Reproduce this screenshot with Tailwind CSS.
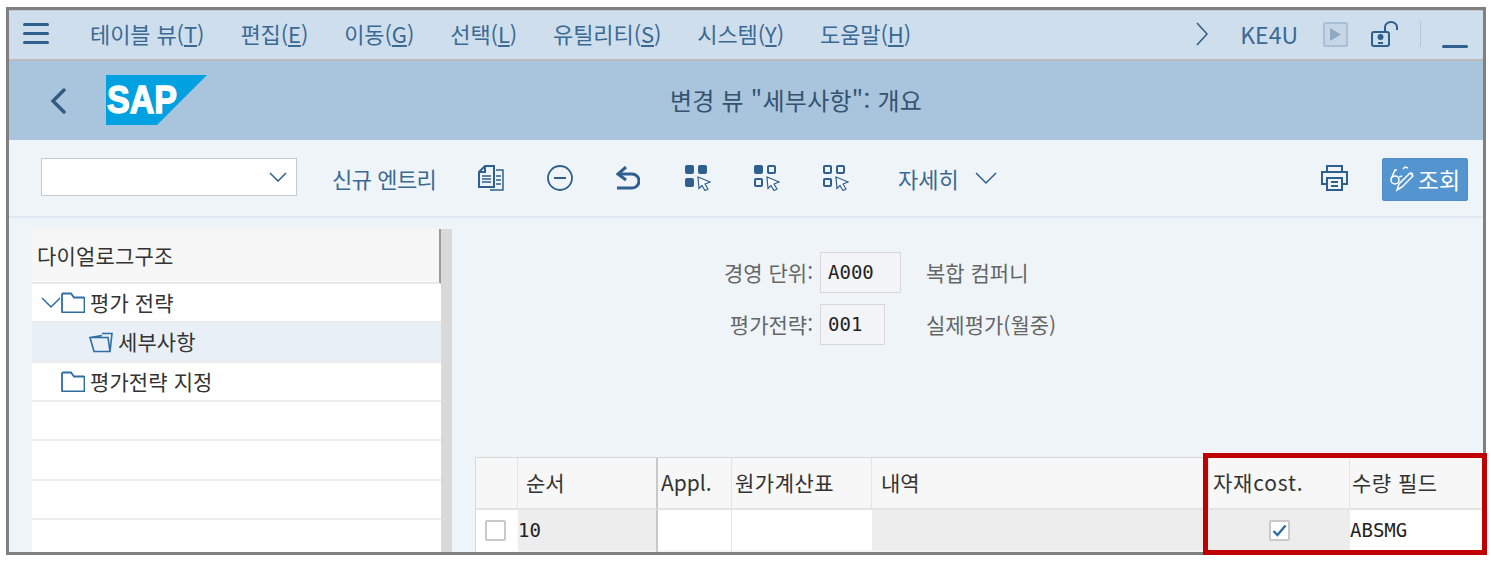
<!DOCTYPE html>
<html lang="ko">
<head>
<meta charset="UTF-8">
<title>변경 뷰 "세부사항": 개요</title>
<script src="https://cdn.jsdelivr.net/npm/@tailwindcss/browser@4"></script>
</head>
<body class="bg-white w-[1491px] h-[562px] overflow-hidden relative font-['Noto_Sans_CJK_KR','Noto_Sans',sans-serif]">

<div class="ml-[6px] mt-[7px] w-[1480px] h-[548px] border-[3px] border-[#808080] overflow-hidden flex flex-col bg-[#eff4f9]">

  <!-- menu bar -->
  <div class="h-[51px] shrink-0 pb-[4px] bg-[#cfdeed] border-b-2 border-[#bcbcbc] border-t-[1px] border-t-[#c4c8cc] flex items-center text-[#3a6a94] text-[22px] tracking-[-0.1px]">
    <div class="ml-[14px] w-[26px] flex flex-col gap-[6px]">
      <div class="h-[3px] rounded bg-[#2f5f8c]"></div>
      <div class="h-[3px] rounded bg-[#2f5f8c]"></div>
      <div class="h-[3px] rounded bg-[#2f5f8c]"></div>
    </div>
    <div class="ml-[41px] flex gap-[36px] whitespace-nowrap">
      <span>테이블 뷰(<u>T</u>)</span>
      <span>편집(<u>E</u>)</span>
      <span>이동(<u>G</u>)</span>
      <span>선택(<u>L</u>)</span>
      <span>유틸리티(<u>S</u>)</span>
      <span>시스템(<u>Y</u>)</span>
      <span>도움말(<u>H</u>)</span>
    </div>
    <div class="ml-auto mt-[2px] flex items-center">
      <svg width="12" height="24" viewBox="0 0 12 24" fill="none" stroke="#2f5f8c" stroke-width="1.6"><path d="M1 1l10 11L1 23"/></svg>
      <span class="ml-[32px] text-[23px] tracking-normal">KE4U</span>
      <div class="ml-[25px] w-[25px] h-[25px] border-2 border-[#a9c0d6] bg-[#c6d6e6] rounded-[2px] flex items-center justify-center">
        <svg width="11" height="13" viewBox="0 0 11 13"><path d="M0 0l11 6.500L0 13z" fill="#8fa9c2"/></svg>
      </div>
      <svg class="ml-[23px]" width="28" height="27" viewBox="0 0 28 27" fill="none" stroke="#2f5f8c" stroke-width="2"><rect x="1" y="11" width="17" height="14" rx="2"/><path d="M14 11V6a6 5 0 0 1 12 0v3"/><circle cx="9.500" cy="16" r="2" fill="#2f5f8c"/><path d="M7 22h5" /></svg>
      <div class="ml-[21px] w-px h-[26px] bg-[#b8c6d2]"></div>
      <div class="ml-[21px] mr-[15px] w-[26px] h-[3px] mt-[24px] rounded bg-[#2f5f8c]"></div>
    </div>
  </div>

  <!-- title bar -->
  <div class="h-[79px] shrink-0 bg-[#a9c4dd] relative flex items-center">
    <svg class="ml-[41px]" width="16" height="26" viewBox="0 0 16 26" fill="none" stroke="#2f5a82" stroke-width="3.400" stroke-linecap="round"><path d="M14 2L3 13l11 11"/></svg>
    <svg class="ml-[40px] -mt-[2px]" width="101" height="50" viewBox="0 0 101 50">
      <path d="M0 0h101L51 50H0z" fill="#00a1e0"/>
      <text x="1" y="38" font-family="Liberation Sans" font-weight="700" font-size="38" fill="#fff" stroke="#fff" stroke-width="1.400" textLength="70" lengthAdjust="spacingAndGlyphs">SAP</text>
    </svg>
    <div class="absolute left-0 right-0 -mt-[2px] pl-[100px] text-center text-[24px] text-[#33536f] tracking-[0.25px]">변경 뷰 "세부사항": 개요</div>
  </div>

  <!-- toolbar -->
  <div class="h-[78px] shrink-0 border-b-2 border-[#e0e9f2] flex items-center text-[#3a6a94] text-[22px] whitespace-nowrap">
    <div class="ml-[32px] -mt-[2px] w-[256px] h-[38px] bg-white border border-[#c6c9cc] flex items-center justify-end pr-[9px]">
      <svg width="18" height="10" viewBox="0 0 18 10" fill="none" stroke="#2f5f8c" stroke-width="1.500"><path d="M1 1l8 8 8-8"/></svg>
    </div>
    <span class="ml-[35px] w-[104px] tracking-[-0.5px]">신규 엔트리</span>
    <svg class="ml-[42px]" width="26" height="27" viewBox="0 0 26 27" fill="none" stroke="#2f5f8c" stroke-width="2"><path d="M7 1h9v21H1V7z"/><path d="M7 1v6H1" /><path d="M4 11h9M4 14h9M4 17h9" stroke-width="1.500"/><path d="M18 5h7v20h-13" stroke-width="1.500"/><path d="M18 11h5M18 15h5M18 19h5" stroke-width="1.500"/></svg>
    <svg class="ml-[43px]" width="26" height="26" viewBox="0 0 26 26" fill="none" stroke="#2f5f8c" stroke-width="1.800"><circle cx="13" cy="13" r="12"/><path d="M7 13h12" stroke-width="2"/></svg>
    <svg class="ml-[43px]" width="24" height="24" viewBox="0 0 24 24" fill="none" stroke="#2f5f8c" stroke-width="3"><path d="M10 1L2 8l8 6"/><path d="M2 8h14a6.500 6.500 0 0 1 0 14H1"/></svg>
    <svg class="ml-[45px]" width="26" height="26" viewBox="0 0 26 26">
      <rect x="0" y="0" width="9" height="9" rx="2" fill="#2f5f8c"/><rect x="13" y="0" width="9" height="9" rx="2" fill="#2f5f8c"/><rect x="0" y="13" width="9" height="9" rx="2" fill="#2f5f8c"/>
      <path d="M13 12l12 5-5 2 3 5-3 1.500-3-5-3 3z" fill="#fff" stroke="#2f5f8c" stroke-width="1.200"/>
    </svg>
    <svg class="ml-[43px]" width="26" height="26" viewBox="0 0 26 26">
      <rect x="0" y="0" width="9" height="9" rx="2" fill="#2f5f8c"/><rect x="14" y="1" width="7" height="7" rx="1" fill="none" stroke="#2f5f8c" stroke-width="2"/><rect x="1" y="14" width="7" height="7" rx="1" fill="none" stroke="#2f5f8c" stroke-width="2"/>
      <path d="M13 12l12 5-5 2 3 5-3 1.500-3-5-3 3z" fill="#fff" stroke="#2f5f8c" stroke-width="1.200"/>
    </svg>
    <svg class="ml-[43px]" width="26" height="26" viewBox="0 0 26 26">
      <rect x="1" y="1" width="7" height="7" rx="1" fill="none" stroke="#2f5f8c" stroke-width="2"/><rect x="14" y="1" width="7" height="7" rx="1" fill="none" stroke="#2f5f8c" stroke-width="2"/><rect x="1" y="14" width="7" height="7" rx="1" fill="none" stroke="#2f5f8c" stroke-width="2"/>
      <path d="M13 12l12 5-5 2 3 5-3 1.500-3-5-3 3z" fill="#fff" stroke="#2f5f8c" stroke-width="1.200"/>
    </svg>
    <span class="ml-[49px] w-[60px]">자세히</span>
    <svg class="ml-[17px]" width="22" height="13" viewBox="0 0 22 13" fill="none" stroke="#2f5f8c" stroke-width="1.500"><path d="M1 1l10 10L21 1"/></svg>
    <svg class="ml-auto" width="27" height="26" viewBox="0 0 27 26" fill="none" stroke="#2f5f8c" stroke-width="2"><path d="M6 7V1h15v6"/><path d="M6 19H1V7h25v12h-5"/><rect x="6" y="13" width="15" height="12"/><path d="M10 17h7M10 21h7" /></svg>
    <div class="ml-[34px] mr-[15px] mt-[2px] w-[86px] h-[43px] bg-[#5495cf] rounded-[2px] border border-[#4f8ec6] flex items-center justify-center text-white text-[23px] gap-[4px]">
      <svg width="24" height="26" viewBox="0 0 24 26" fill="none" stroke="#fff" stroke-width="1.500"><circle cx="5" cy="14" r="4"/><path d="M1 13L5 4h2M9 11l3-1"/><path d="M13 3l2-2 3 1M21 7l2 1"/><path d="M7 24l2-6L20 7l3 3-11 11z"/></svg>
      <span>조회</span>
    </div>
  </div>

  <!-- content -->
  <div class="flex-1 flex min-h-0">
    <!-- tree -->
    <div class="ml-[23px] mt-[11px] w-[420px] flex shrink-0 h-[400px]">
      <div class="w-[409px] text-[21px] text-[#333] tracking-[0.1px]">
        <div class="h-[55px] bg-[#f7f7f7] border-b-2 border-[#e8e8e8] border-r-2 border-r-[#9a9a9a] flex items-center pl-[5px] tracking-[0.2px]">다이얼로그구조</div>
        <div class="h-[39px] bg-white border-b-2 border-[#ededed] flex items-center pl-[9px]">
          <svg width="20" height="12" viewBox="0 0 20 12" fill="none" stroke="#2f6da3" stroke-width="1.500"><path d="M1 1l9 9 9-9"/></svg>
          <svg width="24" height="21" viewBox="0 0 24 21" fill="none" stroke="#2f6da3" stroke-width="1.800"><path d="M1 19.500V2.500a1 1 0 0 1 1-1h8l3 4h9.500a1 1 0 0 1 1 1v13a1 1 0 0 1-1 1H2a1 1 0 0 1-1-1z"/></svg>
          <span class="ml-[5px]">평가 전략</span>
        </div>
        <div class="h-[40px] bg-[#e8eff7] border-b-2 border-[#ededed] flex items-center pl-[57px]">
          <svg width="24" height="21" viewBox="0 0 24 21" fill="none" stroke="#2f6da3" stroke-width="1.600"><path d="M1 5.500l12-2M13 1.500h10l-2 18H5L1 5.500h18l2 14"/></svg>
          <span class="ml-[5px]">세부사항</span>
        </div>
        <div class="h-[39px] bg-white border-b-2 border-[#ededed] flex items-center pl-[29px]">
          <svg width="24" height="21" viewBox="0 0 24 21" fill="none" stroke="#2f6da3" stroke-width="1.800"><path d="M1 19.500V2.500a1 1 0 0 1 1-1h8l3 4h9.500a1 1 0 0 1 1 1v13a1 1 0 0 1-1 1H2a1 1 0 0 1-1-1z"/></svg>
          <span class="ml-[5px]">평가전략 지정</span>
        </div>
        <div class="h-[39px] bg-white border-b-2 border-[#ededed]"></div>
        <div class="h-[40px] bg-white border-b-2 border-[#ededed]"></div>
        <div class="h-[39px] bg-white border-b-2 border-[#ededed]"></div>
        <div class="h-[40px] bg-white"></div>
      </div>
      <div class="w-[11px] bg-[#d9d9d9]"></div>
    </div>

    <!-- right side -->
    <div class="flex-1 min-w-0 flex flex-col">
      <div class="h-[239px] shrink-0 pt-[34px] text-[21px] text-[#666]">
        <div class="flex items-center h-[41px]">
          <span class="w-[361px] text-right">경영 단위:</span>
          <div class="ml-[7px] w-[81px] h-[41px] bg-[#f2f4f7] border border-[#d9d9d9] flex items-center pl-[7px] font-['DejaVu_Sans_Mono',monospace] text-[#222] text-[19px]">A000</div>
          <span class="ml-[25px]">복합 컴퍼니</span>
        </div>
        <div class="flex items-center h-[41px] mt-[11px]">
          <span class="w-[361px] text-right">평가전략:</span>
          <div class="ml-[7px] w-[65px] h-[41px] bg-[#f2f4f7] border border-[#d9d9d9] flex items-center pl-[7px] font-['DejaVu_Sans_Mono',monospace] text-[#222] text-[19px]">001</div>
          <span class="ml-[41px]">실제평가(월중)</span>
        </div>
      </div>

      <!-- table -->
      <div class="ml-[23px] grid grid-cols-[42px_140px_74px_140px_337px_141px_134px] grid-rows-[52px_40px_8px] text-[21px] text-[#333] border-l border-[#d8d8d8] border-t whitespace-nowrap">
        <div class="bg-[#f7f7f7] border-r border-b-2 border-[#e4e4e4]"></div>
        <div class="bg-[#f7f7f7] border-r-2 border-r-[#c8c8c8] border-b-2 border-[#e4e4e4] flex items-center pl-[8px]">순서</div>
        <div class="bg-[#f7f7f7] border-r border-b-2 border-[#e4e4e4] flex items-center pl-[3px]">Appl.</div>
        <div class="bg-[#f7f7f7] border-r border-b-2 border-[#e4e4e4] flex items-center pl-[3px] tracking-[0.5px]">원가계산표</div>
        <div class="bg-[#f7f7f7] border-r border-b-2 border-[#e4e4e4] flex items-center pl-[9px]">내역</div>
        <div class="bg-[#f7f7f7] border-r border-b-2 border-[#e4e4e4] flex items-center pl-[4px] tracking-[0.8px]">자재cost.</div>
        <div class="bg-[#f7f7f7] border-b-2 border-[#e4e4e4] flex items-center pl-[2px] tracking-[0.5px]">수량 필드</div>

        <div class="bg-white flex items-center pl-[9px]"><div class="w-[21px] h-[21px] bg-white border-2 border-[#c9c9c9] rounded-[2px]"></div></div>
        <div class="bg-[#ededed] border-r-2 border-r-[#c8c8c8] flex items-center font-['DejaVu_Sans_Mono',monospace] text-[19px] text-[#222]">10</div>
        <div class="bg-white border-r border-[#e4e4e4]"></div>
        <div class="bg-white"></div>
        <div class="bg-[#ededed]"></div>
        <div class="bg-[#ededed] flex items-center justify-center">
          <div class="w-[21px] h-[21px] bg-white border-2 border-[#c9c9c9] rounded-[2px] flex items-center justify-center">
            <svg width="15" height="13" viewBox="0 0 15 13" fill="none" stroke="#2f6da3" stroke-width="2.400"><path d="M1.500 7l4 4 8-9.500"/></svg>
          </div>
        </div>
        <div class="bg-white flex items-center font-['DejaVu_Sans_Mono',monospace] text-[19px] text-[#222]">ABSMG</div>

        <div class="bg-white"></div>
        <div class="bg-[#f4f4f4] border-r-2 border-r-[#c8c8c8]"></div>
        <div class="bg-[#f4f4f4] border-r border-[#e4e4e4]"></div>
        <div class="bg-[#f4f4f4]"></div>
        <div class="bg-[#f4f4f4]"></div>
        <div class="bg-[#f4f4f4]"></div>
        <div class="bg-[#f4f4f4]"></div>
      </div>
    </div>
  </div>
</div>

<!-- red highlight box over the last two columns -->
<div class="absolute left-[1203px] top-[453px] w-[284px] h-[102px] border-[5px] border-[#c00000]"></div>
</body>
</html>
